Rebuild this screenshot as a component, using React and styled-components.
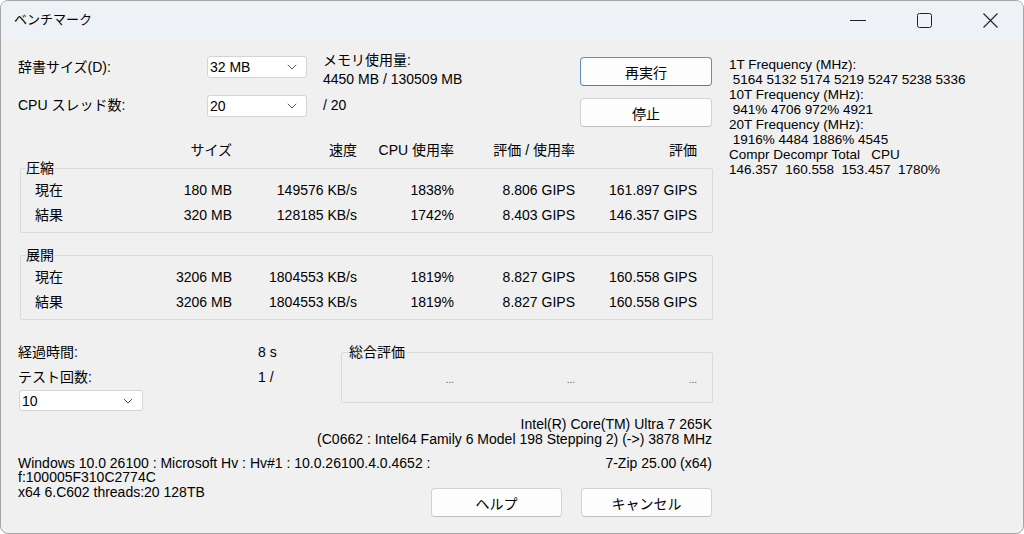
import React from 'react';
import styled, { createGlobalStyle } from 'styled-components';

const GlobalStyle = createGlobalStyle`
	html, body {
		margin: 0;
		padding: 0;
		background: #ffffff;
	}
	* {
		box-sizing: border-box;
	}
`

const Window = styled.div`
	width: 1024px;
	height: 534px;
	border: 1px solid #a5a5a5;
	border-radius: 8px;
	overflow: hidden;
	display: flex;
	flex-direction: column;
	background: #f0f0f0;
	color: #000;
	font-family: "Liberation Sans", "Noto Sans CJK JP", sans-serif;
	font-size: 14px;
`

const TitleBar = styled.div`
	height: 39px;
	flex: none;
	display: flex;
	align-items: center;
	padding-left: 13px;
	background: #eef2f7;
`

const Title = styled.span`
	font-size: 13px;
	line-height: 16px;
	padding-bottom: 2px;
`

const WinControls = styled.div`
	margin-left: auto;
	display: flex;
	height: 100%;
`

const WinButton = styled.div`
	width: 66px;
	height: 100%;
	display: flex;
	align-items: center;
	justify-content: center;
	padding-bottom: 1px;
`

const Body = styled.div`
	flex: 1;
	display: flex;
	padding-left: 17px;
`

const MainColumn = styled.div`
	width: 695px;
	flex: none;
	display: flex;
	flex-direction: column;
`

const TopGrid = styled.div`
	display: grid;
	grid-template-columns: 189px 116px 257px 132px;
	grid-template-rows: 38px 34px;
	padding-top: 16px;
`

const FieldLabel = styled.div`
	line-height: 22px;
	height: 22px;
	white-space: nowrap;
	margin-top: ${p => p.$offset || 0}px;
`

const MemoryInfo = styled.div`
	line-height: 19px;
	margin-top: -5.5px;
	white-space: nowrap;
`

const ComboBox = styled.div`
	width: ${p => p.$width}px;
	height: ${p => p.$height || 22}px;
	margin-top: ${p => p.$offset || 0}px;
	margin-left: ${p => p.$indent || 0}px;
	background: #ffffff;
	border: 1px solid #d4d4d4;
	border-radius: 3px;
	display: flex;
	align-items: center;
	padding: 0 9px 0 2px;
	line-height: 18px;

	span {
		flex: 1;
	}
`

const PushButton = styled.button`
	width: 132px;
	height: 29px;
	margin-top: ${p => p.$offset || 0}px;
	background: #fdfdfd;
	border: 1px solid ${p => (p.$primary ? '#5a90c4' : '#d2d2d2')};
	border-bottom-color: ${p => (p.$primary ? '#4a80b6' : '#c0c0c0')};
	border-radius: 4px;
	font-family: "Noto Sans CJK JP", "Liberation Sans", sans-serif;
	font-size: 14px;
	color: #000;
	padding: 0;
	line-height: 20px;
`

const ColumnsRow = styled.div`
	display: grid;
	grid-template-columns: 97px 100px 125px 97px 121px 122px;
	padding-left: ${p => p.$indent}px;
	height: ${p => p.$height}px;
	line-height: ${p => p.$height}px;
	white-space: nowrap;

	& > * {
		text-align: right;
	}
	& > *:first-child {
		text-align: left;
	}
`

const HeaderRow = styled(ColumnsRow)`
	margin-top: 14px;
	margin-left: 2px;
`

const Group = styled.fieldset`
	margin: ${p => p.$gap}px 0 0 ${p => p.$indent}px;
	width: ${p => p.$width}px;
	padding: ${p => p.$padTop}px 0 ${p => p.$padBottom}px 0;
	border: 1px solid #dadada;
	border-radius: 2px;
	min-width: 0;
`

const GroupTitle = styled.legend`
	margin-left: ${p => p.$indent}px;
	padding: 0 1px 0 0;
	line-height: 16px;
	font-size: 14px;
`

const GroupRows = styled.div`
	padding-top: 1.5px;
`

const BottomRow = styled.div`
	display: flex;
	align-items: flex-start;
	margin-top: 24px;
`

const StatsColumn = styled.div`
	width: 323px;
	flex: none;
	display: flex;
	flex-direction: column;
`

const StatRow = styled.div`
	display: grid;
	grid-template-columns: 240px 1fr;
	line-height: 16px;
	margin-bottom: 9px;
	white-space: nowrap;
`

const ScoreGrid = styled.div`
	display: grid;
	grid-template-columns: 112px 121px 122px;
	padding-right: 15px;
	line-height: 16px;
	color: #555;
	font-size: 10px;

	span {
		text-align: right;
	}
`

const CpuInfo = styled.div`
	margin-top: 5.5px;
	line-height: 15px;
	text-align: right;
	padding-right: 1px;
	white-space: nowrap;
`

const SystemRow = styled.div`
	display: flex;
	justify-content: space-between;
	margin-top: 9px;
`

const SystemText = styled.div`
	line-height: 14.5px;
	white-space: nowrap;
`

const SystemRight = styled.div`
	display: flex;
	flex-direction: column;
	align-items: flex-end;
	padding-right: 1px;
	line-height: 15px;
`

const DialogButtons = styled.div`
	display: flex;
	gap: 19px;
	margin-top: 17.5px;
`

const SmallButton = styled(PushButton)`
	width: 131px;
`

const FreqPanel = styled.pre`
	margin: 0 0 0 16px;
	padding-top: 16.5px;
	font-family: "Liberation Sans", "Noto Sans CJK JP", sans-serif;
	font-size: 13.5px;
	line-height: 15px;
	color: #000;
`

const Chevron = () => (
	<svg width="10" height="6" viewBox="0 0 10 6">
		<path d="M0.8 0.8 L5 5 L9.2 0.8" fill="none" stroke="#5a5a5a" strokeWidth="1" />
	</svg>
)

const results = [
	{
		title: '圧縮',
		rows: [
			['現在', '180 MB', '149576 KB/s', '1838%', '8.806 GIPS', '161.897 GIPS'],
			['結果', '320 MB', '128185 KB/s', '1742%', '8.403 GIPS', '146.357 GIPS']
		]
	},
	{
		title: '展開',
		rows: [
			['現在', '3206 MB', '1804553 KB/s', '1819%', '8.827 GIPS', '160.558 GIPS'],
			['結果', '3206 MB', '1804553 KB/s', '1819%', '8.827 GIPS', '160.558 GIPS']
		]
	}
]

const freqText = `1T Frequency (MHz):
 5164 5132 5174 5219 5247 5238 5336
10T Frequency (MHz):
 941% 4706 972% 4921
20T Frequency (MHz):
 1916% 4484 1886% 4545
Compr Decompr Total   CPU
146.357  160.558  153.457  1780%`

function App() {
	return (
		<Window>
			<GlobalStyle />
			<TitleBar>
				<Title>ベンチマーク</Title>
				<WinControls>
					<WinButton>
						<svg width="16" height="16" viewBox="0 0 16 16">
							<path d="M0 8.5 H16" stroke="#222" strokeWidth="1" />
						</svg>
					</WinButton>
					<WinButton>
						<svg width="15" height="15" viewBox="0 0 15 15">
							<rect x="0.5" y="0.5" width="14" height="14" rx="2" fill="none" stroke="#222" strokeWidth="1" />
						</svg>
					</WinButton>
					<WinButton>
						<svg width="15" height="15" viewBox="0 0 15 15">
							<path d="M0.5 0.5 L14.5 14.5 M14.5 0.5 L0.5 14.5" stroke="#222" strokeWidth="1.1" />
						</svg>
					</WinButton>
				</WinControls>
			</TitleBar>
			<Body>
				<MainColumn>
					<TopGrid>
						<FieldLabel>辞書サイズ(D):</FieldLabel>
						<ComboBox $width={100}>
							<span>32 MB</span>
							<Chevron />
						</ComboBox>
						<MemoryInfo>
							メモリ使用量:
							<br />
							4450 MB / 130509 MB
						</MemoryInfo>
						<PushButton $primary $offset={1}>再実行</PushButton>

						<FieldLabel>CPU スレッド数:</FieldLabel>
						<ComboBox $width={100} $offset={1}>
							<span>20</span>
							<Chevron />
						</ComboBox>
						<FieldLabel>/ 20</FieldLabel>
						<PushButton $offset={4}>停止</PushButton>
					</TopGrid>

					<HeaderRow $indent={15} $height={16}>
						<span></span>
						<span>サイズ</span>
						<span>速度</span>
						<span>CPU 使用率</span>
						<span>評価 / 使用率</span>
						<span>評価</span>
					</HeaderRow>

					{results.map((group, i) => (
						<Group key={group.title} $gap={i === 0 ? 2 : 14} $indent={2} $width={693} $padTop={0} $padBottom={5}>
							<GroupTitle $indent={5}>{group.title}</GroupTitle>
							<GroupRows>
								{group.rows.map((row, j) => (
									<ColumnsRow key={j} $indent={14} $height={j === 0 ? 25 : 24.5}>
										{row.map((cell, k) => (
											<span key={k}>{cell}</span>
										))}
									</ColumnsRow>
								))}
							</GroupRows>
						</Group>
					))}

					<BottomRow>
						<StatsColumn>
							<StatRow>
								<span>経過時間:</span>
								<span>8 s</span>
							</StatRow>
							<StatRow>
								<span>テスト回数:</span>
								<span>1 /</span>
							</StatRow>
							<ComboBox $width={124} $height={21} $indent={1} $offset={-4}>
								<span>10</span>
								<Chevron />
							</ComboBox>
						</StatsColumn>
						<Group $gap={0} $indent={0} $width={372} $padTop={12} $padBottom={14}>
							<GroupTitle $indent={7}>総合評価</GroupTitle>
							<ScoreGrid>
								<span>...</span>
								<span>...</span>
								<span>...</span>
							</ScoreGrid>
						</Group>
					</BottomRow>

					<CpuInfo>
						Intel(R) Core(TM) Ultra 7 265K
						<br />
						(C0662 : Intel64 Family 6 Model 198 Stepping 2) (-&gt;) 3878 MHz
					</CpuInfo>

					<SystemRow>
						<SystemText>
							Windows 10.0 26100 : Microsoft Hv : Hv#1 : 10.0.26100.4.0.4652 :
							<br />
							f:100005F310C2774C
							<br />
							x64 6.C602 threads:20 128TB
						</SystemText>
						<SystemRight>
							<span>7-Zip 25.00 (x64)</span>
							<DialogButtons>
								<SmallButton>ヘルプ</SmallButton>
								<SmallButton>キャンセル</SmallButton>
							</DialogButtons>
						</SystemRight>
					</SystemRow>
				</MainColumn>
				<FreqPanel>{freqText}</FreqPanel>
			</Body>
		</Window>
	)
}

export default App;
